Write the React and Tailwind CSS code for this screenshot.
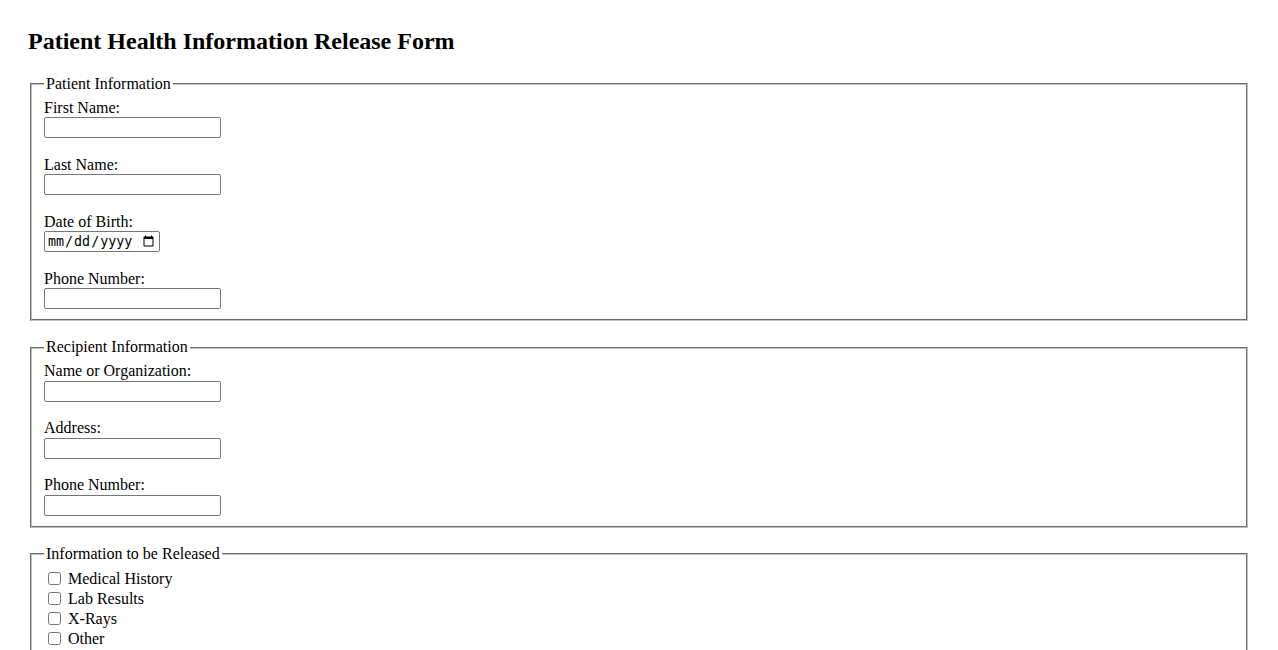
import React from "react";

function TextField({ label, last }) {
  return (
    <div className={last ? "" : "mb-[17.6px]"}>
      <label className="block leading-[18.4px]">{label}</label>
      <input
        type="text"
        className="block w-[177px] h-[21px] border border-[#767676] rounded-[2px] bg-white px-[2px] text-[13.33px] font-['DejaVu_Sans',sans-serif]"
      />
    </div>
  );
}

function Fieldset({ legend, children, className = "" }) {
  return (
    <fieldset
      className={
        "mx-[2px] border-2 [border-style:groove] border-[#c0c0c0] pt-[5.6px] px-3 pb-[10px] " +
        className
      }
    >
      <legend className="px-[2px] leading-[18.4px]">{legend}</legend>
      {children}
    </fieldset>
  );
}

export default function App() {
  return (
    <div className="bg-white min-h-[650px] p-[28px] pt-[27px] font-['Liberation_Serif',serif] text-[16px] leading-[18.4px] text-black">
      <h1 className="text-[24px] font-bold leading-[28px] mb-[20px]">
        Patient Health Information Release Form
      </h1>

      <Fieldset legend="Patient Information" className="mb-[17px]">
        <TextField label="First Name:" />
        <TextField label="Last Name:" />
        <div className="mb-[17.6px]">
          <label className="block leading-[18.4px]">Date of Birth:</label>
          <input
            type="date"
            className="block w-[116px] h-[21px] border border-[#767676] rounded-[2px] bg-white px-[2px] py-[1px] text-[13.33px] leading-[normal] font-['DejaVu_Sans_Mono',monospace]"
          />
        </div>
        <TextField label="Phone Number:" last />
      </Fieldset>

      <Fieldset legend="Recipient Information" className="mb-[17px]">
        <TextField label="Name or Organization:" />
        <TextField label="Address:" />
        <TextField label="Phone Number:" last />
      </Fieldset>

      <Fieldset legend="Information to be Released">
        {["Medical History", "Lab Results", "X-Rays", "Other"].map((t) => (
          <div key={t} className="flex items-center h-[20px]">
            <input type="checkbox" className="w-[13px] h-[13px] m-[3px_3px_3px_4px]" />
            <span className="ml-[4px]">{t}</span>
          </div>
        ))}
      </Fieldset>
    </div>
  );
}
